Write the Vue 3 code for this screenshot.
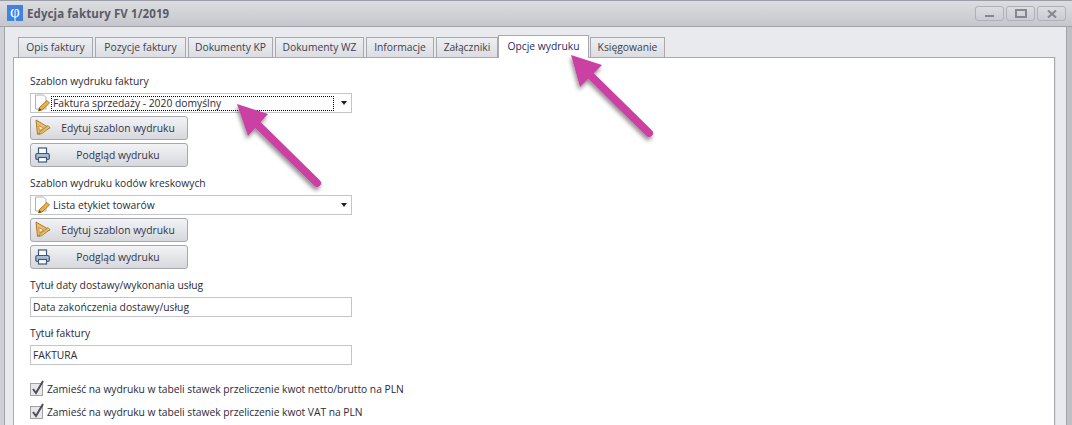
<script setup>
const tabs = [
  { label: 'Opis faktury', width: 75 },
  { label: 'Pozycje faktury', width: 91 },
  { label: 'Dokumenty KP', width: 85 },
  { label: 'Dokumenty WZ', width: 89 },
  { label: 'Informacje', width: 68 },
  { label: 'Załączniki', width: 62 },
  { label: 'Opcje wydruku', width: 91, active: true },
  { label: 'Księgowanie', width: 75 }
]
</script>

<template>
  <div class="window">
    <header class="titlebar">
      <div class="logo">φ</div>
      <div class="title">Edycja faktury FV 1/2019</div>
      <div class="winbtns">
        <button class="winbtn"><span class="g-min"></span></button>
        <button class="winbtn"><span class="g-max"></span></button>
        <button class="winbtn">
          <svg width="10" height="8" viewBox="0 0 10 8"><path d="M1 0.5 L9 7.5 M9 0.5 L1 7.5" stroke="#85868e" stroke-width="2" fill="none"/></svg>
        </button>
      </div>
    </header>
    <div class="client">
      <nav class="tabs">
        <div v-for="t in tabs" :key="t.label" class="tab" :class="{ active: t.active }" :style="{ width: t.width + 'px' }">{{ t.label }}</div>
      </nav>
      <main class="panel">
        <div class="label first">Szablon wydruku faktury</div>
        <div class="combo">
          <svg class="docicon" width="18" height="18" viewBox="0 0 18 18">
            <path d="M1.5 1 H9.5 L12 3.5 V15 H1.5 Z" fill="#fbfcfe" stroke="#aab1bf"/>
            <path d="M4.5 17 L5.5 13.5 L13 6.5 L15.5 9 L8 16 Z" fill="#edb13e" stroke="#94691c" stroke-width=".8"/>
            <path d="M4.5 17 L5.4 14.2 L7.4 16 Z" fill="#4a4032"/>
          </svg>
          <span class="comboval focus">Faktura sprzedaży - 2020 domyślny</span>
          <span class="caret"></span>
        </div>
        <button class="btn">
          <svg class="btnicon" width="18" height="18" viewBox="0 0 18 18">
            <path d="M1 1 L14.5 9 L2.5 15.5 Z" fill="#efbd68" stroke="#a87a30"/>
            <path d="M3.8 6.5 L8.5 9.2 L4.4 11.6 Z" fill="#f9f5ea" stroke="#a87a30" stroke-width=".7"/>
            <path d="M4 15.5 L5 12.6 L13 6.5 L15 8.6 L7 14.6 Z" fill="#e9bb55" stroke="#7d6a3c" stroke-width=".6"/>
          </svg>
          <span>Edytuj szablon wydruku</span>
        </button>
        <button class="btn">
          <svg class="btnicon" width="18" height="18" viewBox="0 0 18 18">
            <rect x="3.5" y="2" width="8" height="6" fill="#fff" stroke="#3f5878" stroke-width="1.2"/>
            <rect x="0.8" y="7.5" width="13.5" height="6" rx="1.5" fill="#a8bdd2" stroke="#3f5878" stroke-width="1.2"/>
            <rect x="3.5" y="11.5" width="8" height="4.5" fill="#fff" stroke="#3f5878" stroke-width="1.2"/>
          </svg>
          <span>Podgląd wydruku</span>
        </button>

        <div class="label second">Szablon wydruku kodów kreskowych</div>
        <div class="combo">
          <svg class="docicon" width="18" height="18" viewBox="0 0 18 18">
            <path d="M1.5 1 H9.5 L12 3.5 V15 H1.5 Z" fill="#fbfcfe" stroke="#aab1bf"/>
            <path d="M4.5 17 L5.5 13.5 L13 6.5 L15.5 9 L8 16 Z" fill="#edb13e" stroke="#94691c" stroke-width=".8"/>
            <path d="M4.5 17 L5.4 14.2 L7.4 16 Z" fill="#4a4032"/>
          </svg>
          <span class="comboval">Lista etykiet towarów</span>
          <span class="caret"></span>
        </div>
        <button class="btn">
          <svg class="btnicon" width="18" height="18" viewBox="0 0 18 18">
            <path d="M1 1 L14.5 9 L2.5 15.5 Z" fill="#efbd68" stroke="#a87a30"/>
            <path d="M3.8 6.5 L8.5 9.2 L4.4 11.6 Z" fill="#f9f5ea" stroke="#a87a30" stroke-width=".7"/>
            <path d="M4 15.5 L5 12.6 L13 6.5 L15 8.6 L7 14.6 Z" fill="#e9bb55" stroke="#7d6a3c" stroke-width=".6"/>
          </svg>
          <span>Edytuj szablon wydruku</span>
        </button>
        <button class="btn">
          <svg class="btnicon" width="18" height="18" viewBox="0 0 18 18">
            <rect x="3.5" y="2" width="8" height="6" fill="#fff" stroke="#3f5878" stroke-width="1.2"/>
            <rect x="0.8" y="7.5" width="13.5" height="6" rx="1.5" fill="#a8bdd2" stroke="#3f5878" stroke-width="1.2"/>
            <rect x="3.5" y="11.5" width="8" height="4.5" fill="#fff" stroke="#3f5878" stroke-width="1.2"/>
          </svg>
          <span>Podgląd wydruku</span>
        </button>

        <div class="label second">Tytuł daty dostawy/wykonania usług</div>
        <div class="input">Data zakończenia dostawy/usług</div>
        <div class="label second">Tytuł faktury</div>
        <div class="input">FAKTURA</div>

        <div class="check c1">
          <svg width="16" height="17" viewBox="0 0 16 17">
            <rect x="0.5" y="3.5" width="12" height="12" fill="#e8e8eb" stroke="#a0a2a8"/>
            <path d="M3 9 L6 13 L13 1" fill="none" stroke="#4f4f55" stroke-width="2"/>
          </svg>
          <span>Zamieść na wydruku w tabeli stawek przeliczenie kwot netto/brutto na PLN</span>
        </div>
        <div class="check c2">
          <svg width="16" height="17" viewBox="0 0 16 17">
            <rect x="0.5" y="3.5" width="12" height="12" fill="#e8e8eb" stroke="#a0a2a8"/>
            <path d="M3 9 L6 13 L13 1" fill="none" stroke="#4f4f55" stroke-width="2"/>
          </svg>
          <span>Zamieść na wydruku w tabeli stawek przeliczenie kwot VAT na PLN</span>
        </div>
      </main>
    </div>
    <svg class="arrows" width="1072" height="425" viewBox="0 0 1072 425">
      <defs>
        <filter id="sh" x="-20%" y="-20%" width="140%" height="140%">
          <feDropShadow dx="-1" dy="3" stdDeviation="2" flood-color="#000" flood-opacity=".45"/>
        </filter>
      </defs>
      <g filter="url(#sh)">
        <path d="M258 125 L317 183" stroke="#cb3fa3" stroke-width="8" stroke-linecap="round" fill="none"/>
        <path d="M237 104 L268 114 L248 136 Z" fill="#cb3fa3"/>
        <path d="M591 76 L649 133" stroke="#cb3fa3" stroke-width="8" stroke-linecap="round" fill="none"/>
        <path d="M571 55 L602 65 L580 87 Z" fill="#cb3fa3"/>
      </g>
    </svg>
  </div>
</template>

<style>
html, body { margin: 0; background: #fff; }
</style>
<style scoped>
.window {
  position: relative;
  width: 1072px;
  height: 425px;
  overflow: hidden;
  box-sizing: border-box;
  font-family: "Open Sans", "Noto Sans", sans-serif;
  font-size: 10.3px;
  color: #2a2b3a;
  background: linear-gradient(90deg, #cfd0d5, #bfc0c6);
  padding: 0 5px 0 4px;
  border-top: 1px solid #9c9da6;
}
.titlebar {
  display: flex;
  align-items: center;
  height: 26px;
  box-sizing: border-box;
  margin: 0 -5px 0 -4px;
  padding: 0 6px 0 7px;
  background: linear-gradient(#dcdde0, #c6c7cd);
  border-bottom: 1px solid #a2a3aa;
}
.logo {
  width: 16px;
  height: 16px;
  margin-bottom: 1px;
  background: #3f82e4;
  color: #fff;
  font: 17px/14px "Liberation Serif", serif;
  text-align: center;
}
.title {
  margin-left: 4px;
  font: bold 11.5px "Open Sans", sans-serif;
  letter-spacing: 0.1px;
  color: #5a5b66;
}
.winbtns { margin-left: auto; display: flex; gap: 2px; }
.winbtn {
  width: 29px;
  height: 15px;
  box-sizing: border-box;
  border: 1px solid #b0b1b8;
  border-radius: 3px;
  background: linear-gradient(#dcdde1, #cbccd2);
  padding: 0;
  display: flex;
  align-items: center;
  justify-content: center;
}
.g-min { width: 9px; height: 2px; background: #85868e; margin-top: 5px; }
.g-max { width: 8px; height: 5px; border: 2px solid #85868e; }
.client {
  height: 400px;
  background: #e9eaee;
  border-left: 1px solid #a2a3aa;
  border-right: 1px solid #a2a3aa;
  padding: 8px 11px 0 8px;
  box-sizing: border-box;
}
.tabs { display: flex; align-items: flex-end; height: 22px; padding-left: 5px; gap: 2px; }
.tab {
  height: 20px;
  box-sizing: border-box;
  border: 1px solid #a8a9b0;
  border-bottom: none;
  background: linear-gradient(#eeeff2, #dcdde2);
  text-align: center;
  line-height: 19px;
  color: #40414f;
  white-space: nowrap;
}
.tab.active {
  height: 23px;
  background: #fff;
  line-height: 20px;
  color: #2a2a60;
  position: relative;
  margin-left: -2px;
  margin-right: -1px;
  margin-bottom: -1px;
  padding-bottom: 3px;
}
.panel {
  height: 368px;
  background: #fff;
  border: 1px solid #a8a9b0;
  border-bottom: none;
  padding-left: 16px;
  box-shadow: 1px 0 0 #dcdde0;
}
.label { height: 14px; line-height: 14px; white-space: nowrap; }
.first { margin-top: 16px; margin-bottom: 5px; }
.second { margin-top: 9px; margin-bottom: 5px; }
.combo {
  width: 322px;
  height: 20px;
  box-sizing: border-box;
  border: 1px solid #c4c5ca;
  display: flex;
  align-items: center;
  padding-left: 3px;
  background: #fff;
}
.docicon { flex: none; }
.comboval {
  flex: 1;
  height: 15px;
  box-sizing: border-box;
  line-height: 13px;
  padding-left: 1px;
  margin-right: 6px;
  border: 1px solid transparent;
  margin-left: -1px;
}
.comboval.focus { border: 1px dotted #000; }
.caret {
  flex: none;
  width: 0;
  height: 0;
  border: 3.5px solid transparent;
  border-top: 4px solid #222;
  border-bottom: 0;
  margin-right: 4px;
  margin-left: 1px;
}
.btn {
  display: flex;
  align-items: center;
  width: 158px;
  height: 24px;
  margin-top: 3px;
  box-sizing: border-box;
  border: 1px solid #a6a8ae;
  border-radius: 3px;
  background: linear-gradient(#f2f3f5, #d6d8dd);
  padding: 0 4px 0 4px;
  font: inherit;
  color: #33344a;
}
.btn span { flex: 1; text-align: center; white-space: nowrap; }
.btnicon { flex: none; }
.input {
  width: 322px;
  height: 20px;
  box-sizing: border-box;
  border: 1px solid #c4c5ca;
  line-height: 18px;
  padding-left: 2px;
}
.check { display: flex; align-items: center; gap: 1px; height: 17px; letter-spacing: -0.03px; }
.c1 { margin-top: 15px; }
.c2 { margin-top: 6px; }
.arrows { position: absolute; left: 0; top: -1px; pointer-events: none; }
</style>
